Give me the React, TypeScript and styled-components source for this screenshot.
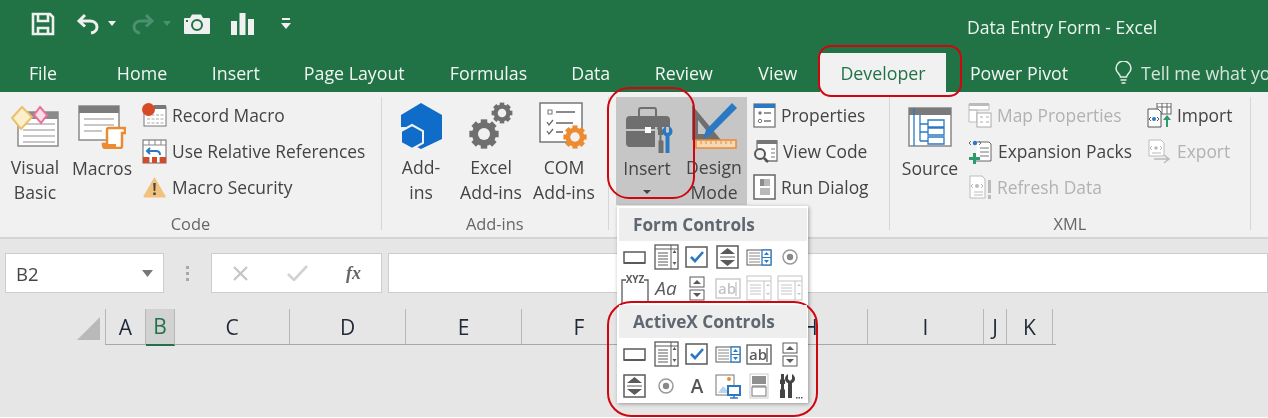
import React from "react";
import styled, { createGlobalStyle } from "styled-components";

const Global = createGlobalStyle`
  html, body { margin: 0; padding: 0; background: #fff; overflow: hidden; }
  #root { width: 1268px; height: 418px; overflow: hidden; }
`;

const font = `"Open Sans", "Noto Sans", "Liberation Sans", sans-serif`;

const Page = styled.div`
  position: relative;
  width: 1268px;
  height: 417px;
  overflow: hidden;
  background: #e6e6e6;
  font-family: ${font};
  font-size: 17.4px;
  color: #444;
  filter: blur(0.35px);
`;

const Header = styled.header`
  background: #217346;
  height: 92px;
  display: flex;
  flex-direction: column;
`;
const TitleRow = styled.div`
  height: 53px;
  display: flex;
  align-items: center;
  padding-left: 31px;
`;
const Qat = styled.div<{ $ml?: number }>`
  display: flex;
  align-items: center;
  margin-left: ${(p) => p.$ml ?? 0}px;
  margin-top: -6px;
`;
const Title = styled.div`
  margin-left: auto;
  width: 301px;
  color: #eef5f1;
  font-size: 17.6px;
  line-height: 24px;
  white-space: nowrap;
`;
const TabRow = styled.nav`
  height: 39px;
  display: flex;
  align-items: stretch;
`;
const Tab = styled.div<{ $w: number; $active?: boolean; $mr?: number }>`
  width: ${(p) => p.$w}px;
  margin-right: ${(p) => p.$mr ?? 0}px;
  flex: none;
  display: flex;
  align-items: center;
  justify-content: center;
  white-space: nowrap;
  font-size: 17.8px;
  color: ${(p) => (p.$active ? "#217346" : "#f1f6f3")};
  background: ${(p) => (p.$active ? "#f1f1f1" : "transparent")};
`;
const TellMe = styled.div`
  margin-left: 23px;
  flex: none;
  display: flex;
  align-items: center;
  gap: 9px;
  color: #d5e5dc;
  white-space: nowrap;
  font-size: 17.8px;
`;

const Ribbon = styled.section`
  height: 145px;
  background: #f1f1f1;
  border-bottom: 2px solid #d4d4d4;
  display: flex;
  align-items: flex-start;
`;
const Group = styled.div<{ $w: number }>`
  width: ${(p) => p.$w}px;
  height: 133px;
  margin-top: 5px;
  border-right: 1.5px solid #d6d6d6;
  box-sizing: border-box;
  display: flex;
  flex-direction: column;
`;
const GroupContent = styled.div<{ $pl: number }>`
  height: 118px;
  display: flex;
  align-items: flex-start;
  padding-left: ${(p) => p.$pl}px;
`;
const GroupLabel = styled.div`
  height: 15px;
  line-height: 18px;
  text-align: center;
  font-size: 16.4px;
  color: #666;
`;
const Large = styled.div<{ $w: number; $pr?: number; $ml?: number; $on?: boolean }>`
  width: ${(p) => p.$w}px;
  height: 108px;
  box-sizing: border-box;
  padding-right: ${(p) => p.$pr ?? 0}px;
  margin-left: ${(p) => p.$ml ?? 0}px;
  background: ${(p) => (p.$on ? "#c6c6c6" : "transparent")};
  display: flex;
  flex-direction: column;
  align-items: center;
  flex: none;
`;
const LargeIcon = styled.div`
  height: 59px;
  display: flex;
  align-items: center;
  justify-content: center;
`;
const LargeText = styled.div`
  line-height: 25px;
  text-align: center;
  white-space: nowrap;
  font-size: 17.6px;
`;
const Caret = styled.div`
  margin-top: 9px;
  width: 0;
  height: 0;
  border-left: 4px solid transparent;
  border-right: 4px solid transparent;
  border-top: 4px solid #444;
`;
const SmallList = styled.div<{ $ml: number; $w?: number }>`
  margin-left: ${(p) => p.$ml}px;
  ${(p) => (p.$w ? `width:${p.$w}px;` : "")}
  display: flex;
  flex-direction: column;
  flex: none;
`;
const SmallRow = styled.div<{ $off?: boolean }>`
  height: 36px;
  display: flex;
  align-items: center;
  gap: 5px;
  white-space: nowrap;
  font-size: 17.4px;
  color: ${(p) => (p.$off ? "#b2b2b2" : "#444")};
`;

const FormulaRow = styled.div`
  margin-top: 14px;
  height: 40px;
  display: flex;
  align-items: stretch;
  padding-left: 5px;
`;
const Field = styled.div<{ $w?: number; $grow?: boolean }>`
  ${(p) => (p.$w ? `width:${p.$w}px;` : "")}
  ${(p) => (p.$grow ? "flex:1;" : "")}
  box-sizing: border-box;
  background: #fff;
  border: 1.5px solid #cdcdcd;
  display: flex;
  align-items: center;
`;
const NameBox = styled(Field)`
  justify-content: space-between;
  padding: 0 10px;
  font-size: 18.5px;
  color: #444;
`;
const Dots = styled.div`
  width: 47px;
  display: flex;
  flex-direction: column;
  align-items: center;
  justify-content: center;
  gap: 3px;
  & > i { width: 3px; height: 3px; background: #a8a8a8; display: block; }
`;
const FxField = styled(Field)`
  margin-right: 6px;
  justify-content: space-between;
  padding: 0 20px;
`;
const FxMark = styled.span`
  font-family: "Liberation Serif", serif;
  font-style: italic;
  font-weight: 700;
  font-size: 18px;
  color: #666;
`;

const ColumnRow = styled.div`
  margin-top: 16px;
  height: 36px;
  display: flex;
`;
const Corner = styled.div`
  width: 100px;
  height: 31px;
  margin-right: 5px;
  display: flex;
  justify-content: flex-end;
  align-items: flex-end;
`;
const Columns = styled.div`
  display: flex;
  border-bottom: 1.5px solid #a8a8a8;
  padding-right: 3px;
  height: 36px;
  box-sizing: border-box;
  border-left: 1.5px solid #b8b8b8;
`;
const Col = styled.div<{ $w: number; $sel?: boolean }>`
  width: ${(p) => p.$w}px;
  box-sizing: border-box;
  display: flex;
  align-items: center;
  justify-content: center;
  font-size: 21px;
  color: ${(p) => (p.$sel ? "#217346" : "#1f2a38")};
  border-right: 1.5px solid #b8b8b8;
  background: ${(p) => (p.$sel ? "#d2d2d2" : "transparent")};
  border-bottom: ${(p) => (p.$sel ? "2.5px solid #217346" : "none")};
  margin-bottom: ${(p) => (p.$sel ? "-1.5px" : "0")};
`;

const Menu = styled.div`
  position: absolute;
  left: 617px;
  top: 206px;
  width: 191px;
  height: 197px;
  background: #fff;
  box-shadow: 1px 1px 4px rgba(0, 0, 0, 0.35);
  box-sizing: border-box;
  padding: 2px 1px 0 2px;
  overflow: hidden;
`;
const MenuHead = styled.div`
  height: 33px;
  background: #eeeeee;
  display: flex;
  align-items: center;
  padding-left: 14px;
  font-weight: 700;
  font-size: 17.2px;
  color: #5f6770;
  position: relative;
  z-index: 1;
`;
const MenuGrid = styled.div<{ $h: number; $row: number }>`
  height: ${(p) => p.$h}px;
  display: grid;
  grid-template-columns: repeat(6, 31px);
  grid-auto-rows: ${(p) => p.$row}px;
`;
const Cell = styled.div`
  display: flex;
  align-items: center;
  justify-content: center;
`;

const Callout = styled.div<{ $l: number; $t: number; $w: number; $h: number; $r: number }>`
  position: absolute;
  left: ${(p) => p.$l}px;
  top: ${(p) => p.$t}px;
  width: ${(p) => p.$w}px;
  height: ${(p) => p.$h}px;
  border-radius: ${(p) => p.$r}px;
  border: 2px solid #d0060f;
  box-sizing: border-box;
  pointer-events: none;
`;

/* ---------- icons ---------- */
const W = "#f0f0f0";
const G = "#6f6f6f";
const B = "#2b79c2";
const O = "#ed8b30";

const SaveIcon = () => (
  <svg width="24" height="24" viewBox="0 0 24 24">
    <path d="M2 2h17l3 3v17H2z M7 2v7h10V2 M7 22v-6h10v6" fill="none" stroke={W} strokeWidth="2.600" />
  </svg>
);
const UndoIcon = () => (
  <svg width="24" height="22" viewBox="0 0 24 22">
    <path d="M9 2 3 8l6 5.500M3 8h11c4 0 7 2.500 7 6 0 3-2.500 5.500-6 6" fill="none" stroke={W} strokeWidth="3" />
  </svg>
);
const RedoIcon = () => (
  <svg width="24" height="22" viewBox="0 0 24 22">
    <path d="M15 2l6 6-6 5.500M21 8H10c-4 0-7 2.500-7 6 0 3 2.500 5.500 6 6" fill="none" stroke="#4b9170" strokeWidth="3" />
  </svg>
);
const QatCaret = ({ c = W }: { c?: string }) => (
  <svg width="8" height="5" viewBox="0 0 8 5">
    <path d="M0 0h8L4 5z" fill={c} />
  </svg>
);
const CameraIcon = () => (
  <svg width="26" height="20" viewBox="0 0 26 20">
    <path d="M1 4h5l2-3.500h9L19 4h6a1 1 0 0 1 1 1v14a1 1 0 0 1-1 1H1a1 1 0 0 1-1-1V5a1 1 0 0 1 1-1z" fill={W} />
    <circle cx="13" cy="11" r="5" fill="none" stroke="#217346" strokeWidth="2" />
    <rect x="2" y="6" width="2" height="2" fill="#217346" />
  </svg>
);
const BarsIcon = () => (
  <svg width="23" height="22" viewBox="0 0 23 22">
    <path d="M0 8h6v14H0zM8.500 0h6v22h-6zM17 6h6v16h-6z" fill={W} />
  </svg>
);
const CustomizeIcon = () => (
  <svg width="10" height="11" viewBox="0 0 10 11">
    <path d="M1 0h8v2H1zM0 5h10l-5 6z" fill={W} />
  </svg>
);
const BulbIcon = () => (
  <svg width="17" height="23" viewBox="0 0 17 23">
    <path d="M5.500 16c0-3-4.500-4.500-4.500-8.500a7.500 7.500 0 0 1 15 0c0 4-4.500 5.500-4.500 8.500zM5.500 19h6M6.500 22h4" fill="none" stroke="#e6efe9" strokeWidth="1.500" />
  </svg>
);

const VisualBasicIcon = () => (
  <svg width="48" height="44" viewBox="0 0 48 44">
    <rect x="7" y="8" width="40" height="34" fill="#fff" stroke="#8a8a8a" strokeWidth="1.500" />
    <rect x="7" y="8" width="40" height="7" fill="#8a8a8a" />
    <path d="M12 20h32M12 26h32M12 32h32M12 38h32" stroke="#b5b5b5" strokeWidth="1.500" />
    <path d="M11 3 21 13 10 25 1 14z" fill="#fbeecb" stroke="#e8c16f" strokeWidth="2" />
    <path d="M29 3 36 11 30 19 23 11z" fill="#fbdde5" stroke="#e6719a" strokeWidth="2" />
  </svg>
);
const MacrosIcon = () => (
  <svg width="48" height="44" viewBox="0 0 48 44">
    <rect x="1" y="1" width="40" height="34" fill="#fff" stroke="#8a8a8a" strokeWidth="1.500" />
    <rect x="1" y="1" width="40" height="7" fill="#7c7c7c" />
    <path d="M6 14h30M6 20h30M6 26h18" stroke="#b5b5b5" strokeWidth="1.500" />
    <path d="M31 23h16v5h-3v13q0 2-2 2H27c-2 0-2-3-2-4h4V25q0-2 2-2z" fill="#fff" stroke={O} strokeWidth="2.500" />
    <path d="M25 39h13v4H27z" fill={O} />
  </svg>
);
const RecordIcon = () => (
  <svg width="25" height="24" viewBox="0 0 25 24">
    <rect x="2" y="4" width="22" height="19" fill="#fff" stroke="#777" />
    <rect x="12" y="2" width="12" height="4" fill="#777" />
    <path d="M5 12h17M5 16h17M5 20h17" stroke="#aaa" strokeDasharray="3 1.500" />
    <circle cx="6.500" cy="6.500" r="6.500" fill="#d64a27" />
  </svg>
);
const RelativeIcon = () => (
  <svg width="25" height="25" viewBox="0 0 25 25">
    <rect x="1" y="1" width="23" height="23" fill="#fff" stroke="#666" />
    <path d="M1 6h23M7 1v5M13 1v5M19 1v5M7 18v6M18 18v6" stroke="#888" />
    <path d="M1 18h6v6H1zM10 18h5v6h-5zM18 18h6v6h-6z" fill="#d64a27" />
    <path d="M8 9 5 12l3 3M5 12h9c3 0 4 2 4 4" fill="none" stroke={B} strokeWidth="2" />
  </svg>
);
const WarnIcon = () => (
  <svg width="25" height="22" viewBox="0 0 24 22">
    <path d="M12 1 23 20q.5 1.500-1 1.500H2Q.5 21.500 1 20z" fill="#f2c27d" />
    <path d="M10.800 7h2.400l-.4 8h-1.600zM10.800 16.500h2.400v2.500h-2.400z" fill="#444" />
  </svg>
);
const HexIcon = () => (
  <svg width="44" height="46" viewBox="0 0 44 46">
    <path d="M22 0 43 12v24L22 46 16 43 14 26l-3-2-9 0V12z" fill="#0f6cc9" />
    <path d="M13 22l11 6v12l-11 6-11-6V28z" fill="#0f6cc9" stroke="#f1f1f1" strokeWidth="2" />
  </svg>
);
const Gear = ({ x, y, r, c }: { x: number; y: number; r: number; c: string }) => (
  <g transform={`translate(${x} ${y})`}>
    {[0, 45, 90, 135].map((a) => (
      <rect key={a} x={-r * 0.27} y={-r * 1.22} width={r * 0.54} height={r * 2.44} fill={c} transform={`rotate(${a})`} />
    ))}
    <circle r={r} fill={c} />
    <circle r={r * 0.5} fill="#f1f1f1" />
  </g>
);
const GearsIcon = () => (
  <svg width="44" height="48" viewBox="0 0 44 48">
    <Gear x={15} y={32} r={12} c={G} />
    <Gear x={33} y={11} r={8.500} c={G} />
  </svg>
);
const ComIcon = () => (
  <svg width="50" height="48" viewBox="0 0 50 48">
    <rect x="1" y="1" width="42" height="39" fill="#fff" stroke="#777" strokeWidth="1.500" />
    <rect x="9" y="8" width="4" height="4" fill="none" stroke="#777" />
    <path d="M17 10h19M17 21h17M17 30h7M8 20l2 3 4-5M8 29l2 3 4-5" fill="none" stroke="#666" strokeWidth="1.300" />
    <Gear x={36} y={35} r={9.500} c={O} />
  </svg>
);
const ToolboxIcon = () => (
  <svg width="52" height="52" viewBox="-4 0 52 52">
    <path d="M14 15V9q0-2 2-2h13q2 0 2 2v6" fill="none" stroke={G} strokeWidth="2" />
    <path d="M5 15h36q4 0 4 4v9H1v-9q0-4 4-4zM1 30h44v12q0 4-4 4H5q-4 0-4-4z" fill={G} />
    <rect x="20" y="26" width="6" height="6" fill="#fff" />
    <path d="M30 26h18v26H30z" fill="#c6c6c6" />
    <path d="M33 25h4v3l1 1v5h-1.500v5l2 1v12h-5V40l1-1v-5H33v-5l-1-1z" fill={G} />
    <path d="M41 25v6l1.500 1 1.500-1v-6c2 1 3.500 3 3.500 5.500s-1.500 4-3 4.500v17h-4V35c-1.500-.5-3-2-3-4.500s1.500-4.500 3.500-5.500z" fill={B} />
  </svg>
);
const DesignIcon = () => (
  <svg width="46" height="46" viewBox="0 0 46 46">
    <path d="M1 2 30 37H1z" fill={G} />
    <path d="M7 17 18 31H7z" fill="#c6c6c6" />
    <path d="M41 0l5 5-26 26-8 5 3-9z" fill={B} />
    <rect x="5" y="37" width="40" height="8" fill="#f3d9b8" stroke={O} strokeWidth="1.500" />
    <path d="M10 38v3M15 38v3M20 38v3M25 38v3M30 38v3M35 38v3M40 38v3" stroke={O} />
  </svg>
);
const PropsIcon = () => (
  <svg width="23" height="25" viewBox="0 0 23 25">
    <rect x="1" y="1" width="21" height="23" fill="#fff" stroke="#777" strokeWidth="1.300" />
    <rect x="1" y="1" width="21" height="4" fill={B} />
    <circle cx="7" cy="10" r="1.700" fill="#777" />
    <circle cx="7" cy="18" r="1.700" fill="none" stroke="#777" />
    <path d="M11 10h7M11 18h7" stroke="#777" strokeWidth="1.500" />
  </svg>
);
const ViewCodeIcon = () => (
  <svg width="25" height="23" viewBox="0 0 25 23">
    <path d="M4 9V1h20v20H12" fill="#fff" stroke="#777" strokeWidth="1.300" />
    <rect x="4" y="0" width="20" height="4" fill="#777" />
    <path d="M18 9h4M18 13h4M18 17h4" stroke="#777" />
    <circle cx="7" cy="14" r="5" fill="#f1f1f1" stroke="#555" strokeWidth="2" />
    <path d="M11 18l4 4" stroke="#555" strokeWidth="2.500" />
  </svg>
);
const RunDialogIcon = () => (
  <svg width="23" height="26" viewBox="0 0 23 26">
    <rect x="1" y="1" width="21" height="24" fill="#fff" stroke="#666" strokeWidth="1.500" />
    <path d="M7 5h10v7H7zM7 14h10v7H7z" fill="#b9b9b9" />
    <path d="M7 5h4v7H7z" fill="#8c8c8c" />
  </svg>
);
const SourceIcon = () => (
  <svg width="44" height="40" viewBox="0 0 44 40">
    <rect x="1" y="1" width="42" height="38" fill="#fff" stroke="#888" strokeWidth="1.500" />
    <rect x="1" y="1" width="42" height="7" fill="#7a7a7a" />
    <path d="M6 1v38M12 8v26M12 17h8M12 25h8M12 34h8" stroke={B} strokeWidth="1.300" fill="none" />
    <path d="M20 13h16v7H20zM20 21h16v7H20zM20 30h16v7H20z" fill="#fff" stroke={B} strokeWidth="1.300" />
  </svg>
);
const MapPropsIcon = () => (
  <svg width="24" height="26" viewBox="0 0 24 26">
    <path d="M1 2h20v6H1zM1 8h8v12H1z" fill="#fff" stroke="#bbb" />
    <rect x="1" y="1" width="20" height="3" fill="#bbb" />
    <rect x="9" y="11" width="14" height="14" fill="#fff" stroke="#aaa" />
    <path d="M12 15h3M18 15h3M12 20h3M18 20h3" stroke="#aaa" />
  </svg>
);
const ExpansionIcon = () => (
  <svg width="25" height="25" viewBox="0 0 25 25">
    <path d="M9 3h12l2 2v17H8" fill="#fff" stroke="#666" />
    <path d="M12 9h9M12 13h9M12 17h9" stroke="#777" />
    <circle cx="7" cy="4" r="2.200" fill={B} />
    <path d="M1 4l2-2M1 4l2 2M13 4l-2-2M13 4l-2 2" stroke="#666" />
    <path d="M5 14h3v4h4v3H8v4H5v-4H1v-3h4z" fill="#2f9a6d" />
  </svg>
);
const RefreshIcon = () => (
  <svg width="24" height="25" viewBox="0 0 24 25">
    <path d="M2 1h12l3 3v19H2z" fill="#fff" stroke="#bbb" />
    <path d="M5 9l-2 2 2 2M13 9l2 2-2 2M6 17h9M6 20h9" stroke="#bbb" fill="none" />
    <circle cx="9" cy="11" r="2" fill="#bbb" />
    <path d="M20 5h3v13h-3zM20 20h3v4h-3z" fill="#bbb" />
  </svg>
);
const ImportIcon = () => (
  <svg width="25" height="25" viewBox="0 0 25 25">
    <rect x="10" y="0" width="14" height="11" fill="#fff" stroke="#666" />
    <path d="M10 4h14M15 0v11M20 0v11" stroke="#666" />
    <path d="M1 6h10l3 3v15H1z" fill="#fff" stroke="#555" />
    <circle cx="7" cy="16" r="2" fill={B} />
    <path d="M4 14l-2 2 2 2M10 14l2 2-2 2" stroke="#555" fill="none" />
    <path d="M20 12l4 5h-3v7h-2v-7h-3z" fill="#2f9a6d" />
  </svg>
);
const ExportIcon = () => (
  <svg width="25" height="25" viewBox="0 0 25 25">
    <path d="M2 1h12l3 3v13H2z" fill="#fff" stroke="#bbb" />
    <path d="M5 7l-2 2 2 2M13 7l2 2-2 2M5 14h9" stroke="#bbb" fill="none" />
    <circle cx="9" cy="9" r="1.800" fill="#bbb" />
    <path d="M7 20h14M17 16l5 4-5 4" stroke="#bbb" strokeWidth="1.500" fill="none" />
  </svg>
);
const CloseMark = () => (
  <svg width="17" height="15" viewBox="0 0 17 15">
    <path d="M2 1l13 13M15 1 2 14" stroke="#c4c4c4" strokeWidth="2.200" />
  </svg>
);
const CheckMark = () => (
  <svg width="21" height="16" viewBox="0 0 21 16">
    <path d="M1 9l6 6L20 1" fill="none" stroke="#d2d2d2" strokeWidth="2.600" />
  </svg>
);
const DownTri = () => (
  <svg width="11" height="7" viewBox="0 0 11 7">
    <path d="M0 0h11L5.500 7z" fill="#777" />
  </svg>
);
const CornerTri = () => (
  <svg width="23" height="23" viewBox="0 0 23 23">
    <path d="M23 0v23H0z" fill="#b9b9b9" />
  </svg>
);

/* ---------- form / ActiveX control glyphs ---------- */
const S = "#5a5a5a";
const FADE = "#c4c4c4";
const TxtSvg = styled.text<{ $s: number; $c: string; $w?: number; $i?: boolean }>`
  font-family: ${font};
  font-size: ${(p) => p.$s}px;
  fill: ${(p) => p.$c};
  font-weight: ${(p) => p.$w ?? 400};
  font-style: ${(p) => (p.$i ? "italic" : "normal")};
`;
const Ctl = ({ children }: { children: React.ReactNode }) => (
  <svg width="26" height="26" viewBox="0 0 26 26">
    {children}
  </svg>
);
const BtnGlyph = () => (
  <Ctl>
    <rect x="2" y="8" width="21" height="11" fill="#fff" stroke={S} strokeWidth="1.500" />
    <path d="M2 19h21" stroke={S} strokeWidth="2" />
  </Ctl>
);
const ComboGlyph = () => (
  <Ctl>
    <rect x="2" y="1" width="23" height="24" fill="#fff" stroke={S} strokeWidth="1.300" />
    <path d="M2 5h23M18 1v24M5 9h10M5 12h10M5 15h10M5 18h10M5 21h10" stroke={S} />
    <path d="M19.500 9l2-3 2 3zM19.500 18l2 3 2-3z" fill={S} />
  </Ctl>
);
const CheckGlyph = () => (
  <Ctl>
    <rect x="2" y="3" width="21" height="20" fill="#fff" stroke={S} strokeWidth="1.500" />
    <path d="M7 13l4 4 8-9" fill="none" stroke={B} strokeWidth="2.600" />
  </Ctl>
);
const SpinGlyph = () => (
  <Ctl>
    <rect x="2" y="2" width="21" height="22" fill="#fff" stroke={S} strokeWidth="1.500" />
    <path d="M5 10l7.500-6 7.500 6zM5 16l7.500 6 7.500-6z" fill={S} />
    <path d="M5 13h15" stroke={S} />
  </Ctl>
);
const ListGlyph = () => (
  <Ctl>
    <rect x="1" y="6" width="24" height="15" fill="#fff" stroke={S} />
    <path d="M3 9h11M3 12h11M3 15h11M3 18h11" stroke="#888" />
    <rect x="16" y="6" width="9" height="15" fill="#fff" stroke={B} strokeWidth="1.300" />
    <path d="M16 13.500h9" stroke={B} />
    <path d="M18 11l2.500-3 2.500 3zM18 16l2.500 3 2.500-3z" fill={B} />
  </Ctl>
);
const RadioGlyph = () => (
  <Ctl>
    <circle cx="13" cy="13" r="7" fill="#fff" stroke="#999" strokeWidth="1.500" />
    <circle cx="13" cy="13" r="3.200" fill="#888" />
  </Ctl>
);
const GroupGlyph = () => (
  <svg width="28" height="31" viewBox="0 0 28 31">
    <path d="M5 8H1v23M23 8h4v23" fill="none" stroke={S} strokeWidth="1.300" />
    <TxtSvg x="14" y="11" textAnchor="middle" $s={10} $c={S} $w={700}>XYZ</TxtSvg>
  </svg>
);
const LabelGlyph = () => (
  <Ctl>
    <TxtSvg x="13" y="20" textAnchor="middle" $s={19} $c={S} $i>Aa</TxtSvg>
  </Ctl>
);
const ScrollGlyph = () => (
  <Ctl>
    <rect x="6" y="2" width="14" height="10" fill="#fff" stroke={S} />
    <rect x="6" y="15" width="14" height="10" fill="#fff" stroke={S} />
    <path d="M9 9l4-4 4 4zM9 18h8l-4 4z" fill={S} />
  </Ctl>
);
const AbGlyph = ({ c = S, t = S }: { c?: string; t?: string }) => (
  <Ctl>
    <rect x="1" y="4" width="24" height="19" fill="#fff" stroke={c} strokeWidth="1.300" />
    <TxtSvg x="3" y="19" $s={15} $c={t} $w={600}>ab</TxtSvg>
    <path d="M21 7v14" stroke={t} strokeWidth="1.300" />
  </Ctl>
);
const FadeTable = () => (
  <Ctl>
    <rect x="1" y="1" width="24" height="24" fill="#fff" stroke={FADE} />
    <path d="M1 6h24M18 6v19M4 10h11M4 13h11M4 16h11M4 19h11" stroke={FADE} />
    <path d="M20 11l2-2 2 2zM20 18l2 2 2-2z" fill={FADE} />
  </Ctl>
);
const BigA = () => (
  <Ctl>
    <TxtSvg x="13" y="20" textAnchor="middle" $s={19} $c="#555" $w={600}>A</TxtSvg>
  </Ctl>
);
const ImageGlyph = () => (
  <Ctl>
    <rect x="1" y="2" width="18" height="20" fill="#fff" stroke="#777" />
    <circle cx="14" cy="6" r="2" fill={O} />
    <path d="M3 20l5-7 4 4 2 3z" fill="#bcd3ea" />
    <rect x="13" y="13" width="12" height="9" fill="#fff" stroke={B} strokeWidth="2" />
    <path d="M19 22v3M15 25h8" stroke={B} strokeWidth="1.500" />
  </Ctl>
);
const ToggleGlyph = () => (
  <Ctl>
    <rect x="4" y="1" width="18" height="24" fill="#fff" stroke="#ccc" />
    <rect x="6" y="3" width="14" height="8" fill="#8f8f8f" />
    <rect x="6" y="14" width="14" height="9" fill="#fff" stroke="#777" />
    <path d="M6 13h14" stroke="#777" />
  </Ctl>
);
const ToolsGlyph = () => (
  <svg width="26" height="26" viewBox="0 0 26 26">
    <path d="M4 1h3v5l1 1v4H7v5l1 1v8H3v-8l1-1v-5H3V7l1-1z" fill="#444" />
    <path d="M11 1v5l2 2 2-2V1c2 1 3 3 3 5 0 2-2 4-3 4v15h-4V10c-1 0-3-2-3-4 0-2 1-4 3-5z" fill="#444" />
    <path d="M19 24h1.500v1.500H19zM21.500 24H23v1.500h-1.500zM24 24h1.500v1.500H24z" fill="#555" />
  </svg>
);

const formControls = [
  <BtnGlyph key="1" />, <ComboGlyph key="2" />, <CheckGlyph key="3" />, <SpinGlyph key="4" />, <ListGlyph key="5" />, <RadioGlyph key="6" />,
  <GroupGlyph key="7" />, <LabelGlyph key="8" />, <ScrollGlyph key="9" />, <AbGlyph key="10" c={FADE} t={FADE} />, <FadeTable key="11" />, <FadeTable key="12" />,
];
const activeX = [
  <BtnGlyph key="1" />, <ComboGlyph key="2" />, <CheckGlyph key="3" />, <ListGlyph key="4" />, <AbGlyph key="5" />, <ScrollGlyph key="6" />,
  <SpinGlyph key="7" />, <RadioGlyph key="8" />, <BigA key="9" />, <ImageGlyph key="10" />, <ToggleGlyph key="11" />, <ToolsGlyph key="12" />,
];

const tabs: { t: string; w: number; active?: boolean; mr?: number }[] = [
  { t: "File", w: 86, mr: 7.5 },
  { t: "Home", w: 97 },
  { t: "Insert", w: 90.5 },
  { t: "Page Layout", w: 146.5 },
  { t: "Formulas", w: 122 },
  { t: "Data", w: 82.5 },
  { t: "Review", w: 103.5 },
  { t: "View", w: 84.5 },
  { t: "Developer", w: 126, active: true },
  { t: "Power Pivot", w: 146 },
];

const cols: { t: string; w: number; sel?: boolean }[] = [
  { t: "A", w: 40 },
  { t: "B", w: 29, sel: true },
  { t: "C", w: 115 },
  { t: "D", w: 116 },
  { t: "E", w: 116 },
  { t: "F", w: 115 },
  { t: "", w: 116 },
  { t: "H", w: 115 },
  { t: "I", w: 116 },
  { t: "J", w: 23 },
  { t: "K", w: 46 },
];

export default function App() {
  return (
    <>
      <Global />
      <Page>
        <Header>
          <TitleRow>
            <Qat><SaveIcon /></Qat>
            <Qat $ml={21}><UndoIcon /></Qat>
            <Qat $ml={8}><QatCaret /></Qat>
            <Qat $ml={15}><RedoIcon /></Qat>
            <Qat $ml={8}><QatCaret c="#4b9170" /></Qat>
            <Qat $ml={13}><CameraIcon /></Qat>
            <Qat $ml={21}><BarsIcon /></Qat>
            <Qat $ml={27}><CustomizeIcon /></Qat>
            <Title>Data Entry Form - Excel</Title>
          </TitleRow>
          <TabRow>
            {tabs.map((t) => (
              <Tab key={t.t} $w={t.w} $mr={t.mr} $active={t.active}>{t.t}</Tab>
            ))}
            <TellMe><BulbIcon />Tell me what you want to do</TellMe>
          </TabRow>
        </Header>

        <Ribbon>
          <Group $w={382}>
            <GroupContent $pl={8}>
              <Large $w={54}>
                <LargeIcon><VisualBasicIcon /></LargeIcon>
                <LargeText>Visual</LargeText>
                <LargeText>Basic</LargeText>
              </Large>
              <Large $w={60} $ml={10}>
                <LargeIcon><MacrosIcon /></LargeIcon>
                <LargeText>Macros</LargeText>
              </Large>
              <SmallList $ml={10}>
                <SmallRow><RecordIcon />Record Macro</SmallRow>
                <SmallRow><RelativeIcon />Use Relative References</SmallRow>
                <SmallRow><WarnIcon />Macro Security</SmallRow>
              </SmallList>
            </GroupContent>
            <GroupLabel>Code</GroupLabel>
          </Group>

          <Group $w={226.5}>
            <GroupContent $pl={4}>
              <Large $w={70}>
                <LargeIcon><HexIcon /></LargeIcon>
                <LargeText>Add-</LargeText>
                <LargeText>ins</LargeText>
              </Large>
              <Large $w={70}>
                <LargeIcon><GearsIcon /></LargeIcon>
                <LargeText>Excel</LargeText>
                <LargeText>Add-ins</LargeText>
              </Large>
              <Large $w={76}>
                <LargeIcon><ComIcon /></LargeIcon>
                <LargeText>COM</LargeText>
                <LargeText>Add-ins</LargeText>
              </Large>
            </GroupContent>
            <GroupLabel>Add-ins</GroupLabel>
          </Group>

          <Group $w={281.5}>
            <GroupContent $pl={7.5}>
              <Large $w={78} $pr={16} $on>
                <LargeIcon><ToolboxIcon /></LargeIcon>
                <LargeText>Insert</LargeText>
                <Caret />
              </Large>
              <Large $w={53} $pr={13} $on>
                <LargeIcon><DesignIcon /></LargeIcon>
                <LargeText>Design</LargeText>
                <LargeText>Mode</LargeText>
              </Large>
              <SmallList $ml={6}>
                <SmallRow><PropsIcon />Properties</SmallRow>
                <SmallRow><ViewCodeIcon />View Code</SmallRow>
                <SmallRow><RunDialogIcon />Run Dialog</SmallRow>
              </SmallList>
            </GroupContent>
          </Group>

          <Group $w={361}>
            <GroupContent $pl={10}>
              <Large $w={60}>
                <LargeIcon><SourceIcon /></LargeIcon>
                <LargeText>Source</LargeText>
              </Large>
              <SmallList $ml={8} $w={179}>
                <SmallRow $off><MapPropsIcon />Map Properties</SmallRow>
                <SmallRow><ExpansionIcon />Expansion Packs</SmallRow>
                <SmallRow $off><RefreshIcon />Refresh Data</SmallRow>
              </SmallList>
              <SmallList $ml={0}>
                <SmallRow><ImportIcon />Import</SmallRow>
                <SmallRow $off><ExportIcon />Export</SmallRow>
              </SmallList>
            </GroupContent>
            <GroupLabel>XML</GroupLabel>
          </Group>
        </Ribbon>

        <FormulaRow>
          <NameBox $w={159}>B2<DownTri /></NameBox>
          <Dots><i /><i /><i /></Dots>
          <FxField $w={171}>
            <CloseMark />
            <CheckMark />
            <FxMark>fx</FxMark>
          </FxField>
          <Field $grow />
        </FormulaRow>

        <ColumnRow>
          <Corner><CornerTri /></Corner>
          <Columns>
            {cols.map((c, i) => (
              <Col key={i} $w={c.w} $sel={c.sel}>{c.t}</Col>
            ))}
          </Columns>
        </ColumnRow>

        <Menu>
          <MenuHead>Form Controls</MenuHead>
          <MenuGrid $h={64} $row={31}>
            {formControls.map((g, i) => <Cell key={i}>{g}</Cell>)}
          </MenuGrid>
          <MenuHead>ActiveX Controls</MenuHead>
          <MenuGrid $h={64} $row={32}>
            {activeX.map((g, i) => <Cell key={i}>{g}</Cell>)}
          </MenuGrid>
        </Menu>

        <Callout $l={818} $t={45} $w={144} $h={52} $r={13} />
        <Callout $l={607} $t={87} $w={88} $h={112} $r={22} />
        <Callout $l={607} $t={301} $w={211} $h={116} $r={24} />
      </Page>
    </>
  );
}
